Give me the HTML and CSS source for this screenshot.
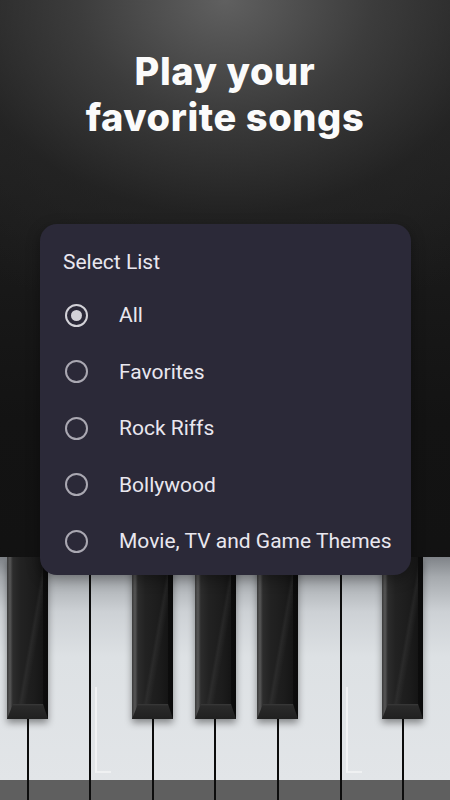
FILE: index.html
```html
<!DOCTYPE html>
<html lang="en">
<head>
<meta charset="utf-8">
<title>Play your favorite songs</title>
<link rel="stylesheet" href="styles.css">
</head>
<body>
<div class="screen">
  <h1 class="title">Play your<br>favorite songs</h1>
  <div class="spacer"></div>
  <div class="piano">
    <div class="whites">
      <div class="wkey"><div class="face"></div><div class="base"></div></div>
      <div class="wkey"><div class="face"></div><div class="base"></div></div>
      <div class="wkey"><div class="face glint"></div><div class="base"></div></div>
      <div class="wkey"><div class="face"></div><div class="base"></div></div>
      <div class="wkey"><div class="face"></div><div class="base"></div></div>
      <div class="wkey"><div class="face"></div><div class="base"></div></div>
      <div class="wkey"><div class="face glint"></div><div class="base"></div></div>
      <div class="wkey"><div class="face"></div><div class="base"></div></div>
    </div>
    <div class="bkey" style="left:7px"></div>
    <div class="bkey" style="left:132px"></div>
    <div class="bkey" style="left:195px"></div>
    <div class="bkey" style="left:257px"></div>
    <div class="bkey" style="left:382px"></div>
  </div>

  <div class="dialog">
    <div class="dialog-title">Select List</div>
    <div class="option"><span class="radio checked"></span><span class="label">All</span></div>
    <div class="option"><span class="radio"></span><span class="label">Favorites</span></div>
    <div class="option"><span class="radio"></span><span class="label">Rock Riffs</span></div>
    <div class="option"><span class="radio"></span><span class="label">Bollywood</span></div>
    <div class="option"><span class="radio"></span><span class="label">Movie, TV and Game Themes</span></div>
  </div>
</div>
</body>
</html>
```

FILE: styles.css
```css
* { box-sizing: border-box; }
html, body { margin: 0; padding: 0; }
body {
  width: 450px;
  height: 800px;
  overflow: hidden;
  background: #111;
}
.screen {
  position: relative;
  width: 450px;
  height: 800px;
  display: flex;
  flex-direction: column;
  background:
    radial-gradient(ellipse 420px 330px at 50% 0, rgba(96,96,96,1) 0%, rgba(64,64,64,0.85) 35%, rgba(40,40,40,0.5) 65%, rgba(20,20,20,0) 100%),
    linear-gradient(#262626 0, #1a1a1a 240px, #131313 420px, #101010 100%);
}
.title {
  margin: 0;
  padding-top: 48px;
  font-family: Inter, "Noto Sans", sans-serif;
  font-weight: 800;
  font-size: 38px;
  line-height: 46px;
  color: #fbfbfb;
  text-align: center;
  letter-spacing: 0.6px;
}
.spacer { flex: 1; }

/* piano */
.piano {
  position: relative;
  height: 243px;
  overflow: hidden;
}
.whites {
  display: flex;
  margin-left: -36px;
  height: 100%;
}
.wkey {
  flex: 0 0 62.6px;
  display: flex;
  flex-direction: column;
  border-left: 2px solid #0c0c0c;
}
.wkey:first-child { border-left: 0; }
.face {
  flex: 1;
  border-radius: 3px 3px 0 0;
  background: linear-gradient(#7f8388 0, #a6aaae 20px, #cdd1d5 55px, #dde1e4 100px, #e2e5e8 100%);
  position: relative;
}
.glint::after {
  content: "";
  position: absolute;
  left: 4px;
  top: 130px;
  bottom: 7px;
  width: 14px;
  border-left: 2px solid rgba(255,255,255,0.55);
  border-bottom: 2px solid rgba(255,255,255,0.45);
}
.base {
  height: 20px;
  background: #5f5f5f;
}
.bkey {
  position: absolute;
  top: 0;
  width: 41px;
  height: 162px;
  background: linear-gradient(90deg, #3a3a3a 0, #575757 3px, #2a2a2a 6px, #151515 50%, #0a0a0a 100%);
  box-shadow: 0 4px 7px rgba(0,0,0,0.4);
}
.bkey::before {
  content: "";
  position: absolute;
  left: 6px;
  right: 5px;
  top: 0;
  bottom: 15px;
  background:
    linear-gradient(100deg, rgba(255,255,255,0) 55%, rgba(255,255,255,0.05) 60%, rgba(255,255,255,0) 70%),
    linear-gradient(90deg, #2c2c2c 0, #222 25%, #1c1c1c 70%, #151515 100%);
}
.bkey::after {
  content: "";
  position: absolute;
  left: 0;
  right: 0;
  bottom: 0;
  height: 15px;
  background: linear-gradient(#3a3a3a 0, #2a2a2a 2px, #202020 100%);
  clip-path: polygon(6px 0, calc(100% - 5px) 0, 100% 100%, 0 100%);
}

/* dialog */
.dialog {
  position: absolute;
  left: 40px;
  top: 224px;
  width: 371px;
  height: 351px;
  border-radius: 17px;
  background: #2b2938;
  padding: 24px 0 0;
  font-family: Roboto, "Liberation Sans", sans-serif;
  box-shadow: 0 4px 14px rgba(0,0,0,0.35);
}
.dialog-title {
  padding-left: 23px;
  font-size: 21px;
  line-height: 28px;
  color: #e9e7ef;
  margin-bottom: 11px;
}
.option {
  display: flex;
  align-items: center;
  height: 56.5px;
  padding-left: 25px;
}
.radio {
  flex: 0 0 auto;
  width: 23px;
  height: 23px;
  border-radius: 50%;
  border: 2px solid #aaa8b2;
  display: flex;
  align-items: center;
  justify-content: center;
}
.radio.checked { border-color: #d3d2d8; }
.radio.checked::after {
  content: "";
  width: 11px;
  height: 11px;
  border-radius: 50%;
  background: #d3d2d8;
}
.label {
  margin-left: 31px;
  font-size: 21px;
  color: #e9e7ef;
  white-space: nowrap;
}
```
